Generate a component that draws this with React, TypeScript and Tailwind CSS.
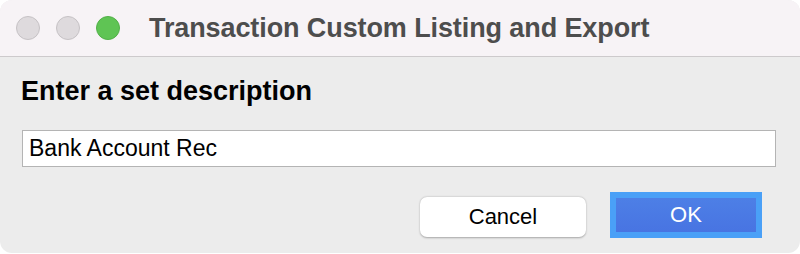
import React from "react";

export default function App() {
  return (
    <div className="w-[800px] h-[254px] bg-white" style={{ fontFamily: "'Liberation Sans', Arial, sans-serif" }}>
      <div className="w-[800px] h-[253px] rounded-[12px] overflow-hidden bg-[#ececec] flex flex-col">
        {/* Title bar */}
        <div className="h-[57px] shrink-0 bg-[#f7f3f6] border-b border-[#cdcacc] flex items-center pl-[16px]">
          <div className="flex items-center gap-[16px]">
            <span className="w-[24px] h-[24px] rounded-full bg-[#dedadd] border border-[#c6c2c5]" />
            <span className="w-[24px] h-[24px] rounded-full bg-[#dedadd] border border-[#c6c2c5]" />
            <span className="w-[24px] h-[24px] rounded-full bg-[#5fc454] border border-[#52b048]" />
          </div>
          <h1 className="ml-[29px] text-[27px] font-bold text-[#4d4d4d] leading-none tracking-[-0.1px]">
            Transaction Custom Listing and Export
          </h1>
        </div>

        {/* Body */}
        <div className="flex-1 px-[21px] pt-[21px]">
          <h2 className="text-[27px] font-bold text-black leading-none">Enter a set description</h2>

          <div className="mt-[25px] ml-[1px] w-[754px] h-[37px] bg-white border border-[#b4b4b4] flex items-center px-[6px]">
            <span className="text-[23px] text-black leading-none">Bank Account Rec</span>
          </div>

          <div className="mt-[25px] flex justify-end items-start gap-[24px] pr-[17px]">
            <button className="w-[166px] h-[40px] mt-[5px] rounded-[7px] bg-white shadow-[0_0.5px_2px_rgba(0,0,0,0.3)] text-[22px] text-black leading-none">
              Cancel
            </button>
            <div className="w-[152px] h-[46px] bg-[#4aa0f7] p-[6px]">
              <button className="w-full h-full bg-gradient-to-b from-[#4d7fe6] to-[#4874e2] text-white text-[22px] leading-none">
                OK
              </button>
            </div>
          </div>
        </div>
      </div>
    </div>
  );
}
